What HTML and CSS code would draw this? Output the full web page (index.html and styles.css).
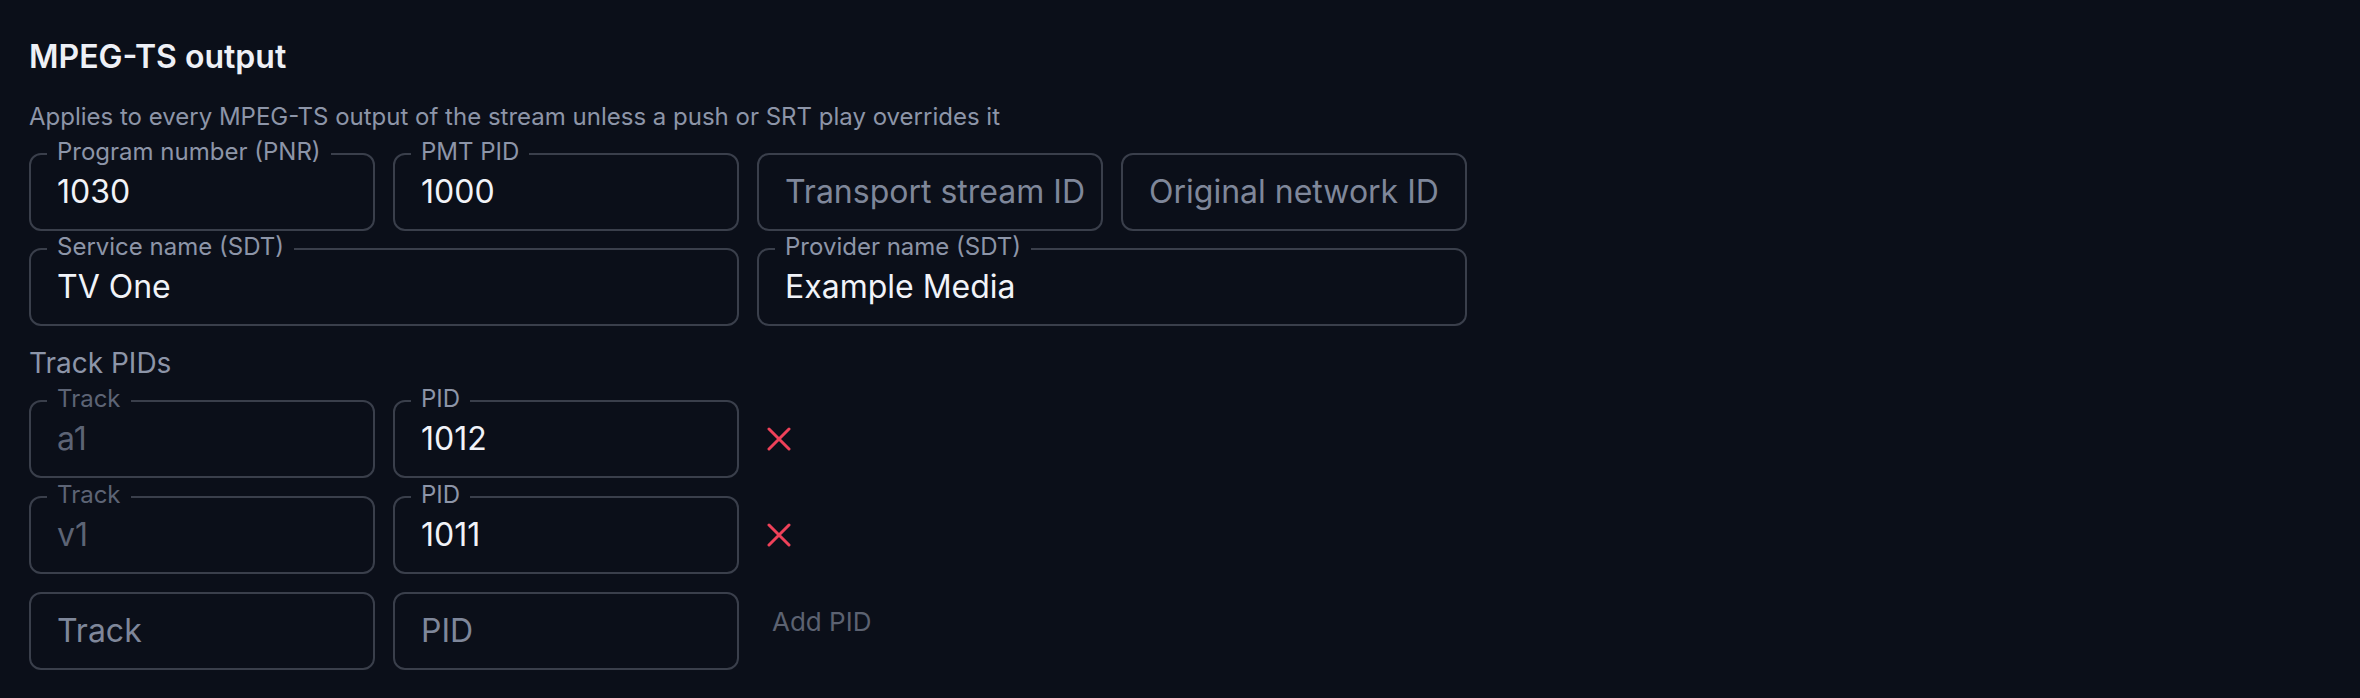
FILE: index.html
```html
<!DOCTYPE html>
<html lang="en">
<head>
<meta charset="utf-8">
<title>MPEG-TS output</title>
<link rel="stylesheet" href="styles.css">
</head>
<body>
<main class="panel">
  <h2 class="title">MPEG-TS output</h2>
  <p class="desc">Applies to every MPEG-TS output of the stream unless a push or SRT play overrides it</p>
  <div class="grid">
    <div class="field"><label class="label">Program number (PNR)</label><input class="input" value="1030"></div>
    <div class="field"><label class="label">PMT PID</label><input class="input" value="1000"></div>
    <div class="field"><input class="input" placeholder="Transport stream ID"></div>
    <div class="field"><input class="input" placeholder="Original network ID"></div>
    <div class="field span2"><label class="label">Service name (SDT)</label><input class="input" value="TV One"></div>
    <div class="field span2"><label class="label">Provider name (SDT)</label><input class="input" value="Example Media"></div>
  </div>
  <div class="sub">Track PIDs</div>
  <div class="tracks">
    <div class="field disabled"><label class="label">Track</label><input class="input" value="a1" disabled></div>
    <div class="field"><label class="label">PID</label><input class="input" value="1012"></div>
    <button class="remove" type="button" aria-label="Remove">
      <svg viewBox="0 0 24 24" width="24" height="24"><path d="M2 2 22 22M22 2 2 22" fill="none" stroke="currentColor" stroke-width="3" stroke-linecap="round"/></svg>
    </button>
    <div class="field disabled"><label class="label">Track</label><input class="input" value="v1" disabled></div>
    <div class="field"><label class="label">PID</label><input class="input" value="1011"></div>
    <button class="remove" type="button" aria-label="Remove">
      <svg viewBox="0 0 24 24" width="24" height="24"><path d="M2 2 22 22M22 2 2 22" fill="none" stroke="currentColor" stroke-width="3" stroke-linecap="round"/></svg>
    </button>
    <div class="field"><input class="input" placeholder="Track"></div>
    <div class="field"><input class="input" placeholder="PID"></div>
    <button class="add" type="button" disabled>Add PID</button>
  </div>
</main>
</body>
</html>
```
FILE: styles.css
```css
html, body {
  margin: 0;
  padding: 0;
  background: #0b0f19;
}
body {
  font-family: Inter, "Noto Sans", sans-serif;
  color: #eef0f6;
}
.panel {
  padding: 38px 29px 0 29px;
}
.title {
  margin: 0;
  font-size: 32px;
  line-height: 38px;
  font-weight: 600;
  color: #eef0f6;
}
.desc {
  margin: 26px 0 0 0;
  font-size: 24px;
  line-height: 30px;
  color: #8d95a8;
}
.grid {
  margin-top: 21px;
  display: grid;
  grid-template-columns: repeat(4, 346px);
  grid-auto-rows: 78px;
  column-gap: 18px;
  row-gap: 17px;
}
.span2 {
  grid-column: span 2;
}
.field {
  position: relative;
  box-sizing: border-box;
  height: 78px;
  border: 2px solid #3a3f4b;
  border-radius: 12px;
  display: flex;
  align-items: center;
}
.label {
  position: absolute;
  top: -17px;
  left: 16px;
  padding: 0 10px;
  background: #0b0f19;
  font-size: 24px;
  line-height: 28px;
  color: #8d95a8;
}
.input {
  width: 100%;
  box-sizing: border-box;
  border: 0;
  outline: none;
  background: transparent;
  padding: 0 0 0 26px;
  margin: 0;
  font-family: inherit;
  font-size: 32px;
  line-height: 38px;
  color: #f1f3f8;
  text-overflow: clip;
}
.input::placeholder {
  color: #7f879a;
  opacity: 1;
}
.disabled .label {
  color: #5d6475;
}
.disabled .input {
  color: #5d6475;
  -webkit-text-fill-color: #5d6475;
}
.sub {
  margin-top: 20px;
  font-size: 28px;
  line-height: 34px;
  color: #8d95a8;
}
.tracks {
  margin-top: 20px;
  display: grid;
  grid-template-columns: 346px 346px auto;
  grid-auto-rows: 78px;
  column-gap: 18px;
  row-gap: 18px;
  align-items: center;
  justify-items: start;
}
.tracks .field {
  width: 346px;
}
.remove {
  margin: 0 0 0 10px;
  padding: 0;
  border: 0;
  background: transparent;
  color: #ef4159;
  width: 24px;
  height: 24px;
  display: flex;
}
.add {
  align-self: start;
  margin: 14px 0 0 0;
  padding: 0 0 0 15px;
  border: 0;
  background: transparent;
  font-family: inherit;
  font-size: 26px;
  line-height: 32px;
  color: #5c6271;
}
```
